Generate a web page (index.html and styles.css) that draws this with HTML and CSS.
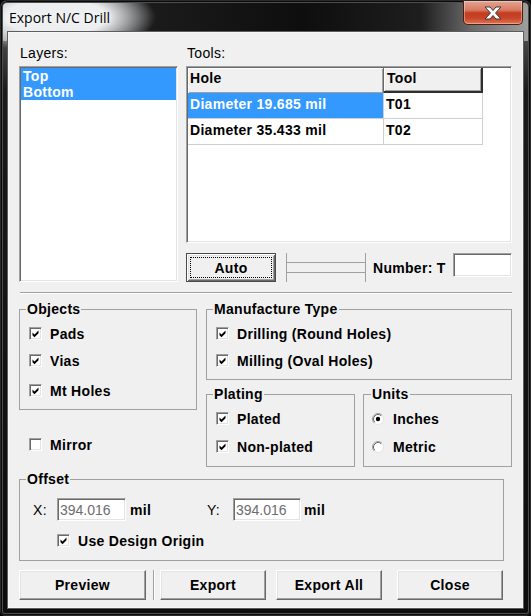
FILE: index.html
```html
<!DOCTYPE html>
<html lang="en">
<head>
  <meta charset="UTF-8" />
  <title>Export N/C Drill</title>
  <link rel="stylesheet" href="styles.css">
</head>
<body>
  <div class="window">
    <div class="titlebar">
      <span class="title">Export N/C Drill</span>
      <button class="close-btn" aria-label="Close">
        <svg width="18" height="14" viewBox="0 0 18 14">
          <path d="M1 1H6L9 4.5L12 1H17L11.5 7L17 13H12L9 9.5L6 13H1L6.5 7Z" fill="#fff" stroke="#3a3a3a" stroke-width="1"/>
        </svg>
      </button>
    </div>

    <div class="client">
      <div class="top">
        <div class="layers">
          <div class="caption">Layers:</div>
          <ul class="listbox">
            <li class="sel">Top</li>
            <li class="sel">Bottom</li>
          </ul>
        </div>

        <div class="tools">
          <div class="caption">Tools:</div>
          <div class="listview">
            <div class="lv-row lv-head">
              <div class="cell c-hole">Hole</div>
              <div class="cell c-tool">Tool</div>
            </div>
            <div class="lv-row">
              <div class="cell sel">Diameter 19.685 mil</div>
              <div class="cell">T01</div>
            </div>
            <div class="lv-row">
              <div class="cell">Diameter 35.433 mil</div>
              <div class="cell">T02</div>
            </div>
          </div>
          <div class="tool-row">
            <button class="btn default"><span class="focus">Auto</span></button>
            <div class="slider"><div class="track"></div></div>
            <span class="num-label">Number: T</span>
            <input class="edit num" type="text" value="">
          </div>
        </div>
      </div>

      <div class="sep"></div>

      <div class="groups">
        <div class="col-left">
          <fieldset class="grp objects">
            <legend>Objects</legend>
            <div class="check"><span class="box on"></span>Pads</div>
            <div class="check"><span class="box on"></span>Vias</div>
            <div class="check far"><span class="box on"></span>Mt Holes</div>
          </fieldset>
          <div class="check mirror"><span class="box"></span>Mirror</div>
        </div>

        <div class="col-right">
          <fieldset class="grp manufacture">
            <legend>Manufacture Type</legend>
            <div class="check"><span class="box on"></span>Drilling (Round Holes)</div>
            <div class="check"><span class="box on"></span>Milling (Oval Holes)</div>
          </fieldset>
          <div class="row2">
            <fieldset class="grp plating">
              <legend>Plating</legend>
              <div class="check"><span class="box on"></span>Plated</div>
              <div class="check wide"><span class="box on"></span>Non-plated</div>
            </fieldset>
            <fieldset class="grp units">
              <legend>Units</legend>
              <div class="radio"><span class="dot on"></span>Inches</div>
              <div class="radio wide"><span class="dot"></span>Metric</div>
            </fieldset>
          </div>
        </div>
      </div>

      <fieldset class="grp offset">
        <legend>Offset</legend>
        <div class="ofs-row">
          <span class="axis">X:</span>
          <input class="edit ofs" type="text" value="394.016">
          <span class="unit unit-x">mil</span>
          <span class="axis axis-y">Y:</span>
          <input class="edit ofs ofs-y" type="text" value="394.016">
          <span class="unit">mil</span>
        </div>
        <div class="check origin"><span class="box on"></span>Use Design Origin</div>
      </fieldset>

      <div class="buttons">
        <button class="btn big preview">Preview</button>
        <div class="vsep"></div>
        <button class="btn big">Export</button>
        <button class="btn big export-all">Export All</button>
        <button class="btn big close">Close</button>
      </div>
    </div>
  </div>
</body>
</html>
```

FILE: styles.css
```css
* {
  box-sizing: border-box;
  margin: 0;
  padding: 0;
}
body {
  width: 531px;
  height: 616px;
  overflow: hidden;
  background: #000;
  font-family: 'Liberation Sans', Arial, sans-serif;
  font-size: 14px;
  font-weight: bold;
  line-height: 16px;
  letter-spacing: 0.3px;
  color: #000;
}

/* window frame */
.window {
  width: 531px;
  height: 616px;
  padding: 0 7px 7px;
  border: 1px solid #2b2b2b;
  border-radius: 7px 7px 5px 5px;
  background:
    radial-gradient(100px 36px at 55px 16px, #eceef0 50%, rgba(236,238,240,0) 100%),
    linear-gradient(90deg, #9a9da1 0, #6a6c70 90px, #1b1b1b 150px, #0e0e0e 300px, #1e1e1e 420px, #6a6a6a 470px, #a2a2a2 531px) top left / 100% 40px no-repeat,
    linear-gradient(180deg, #6b6b6b 0, #1a1a1a 90px, #0d0d0d 100%);
  box-shadow: inset 0 0 0 1px #0a0a0a, inset 0 0 0 2px #4e4e4e;
}
.titlebar {
  display: flex;
  height: 31px;
}
.title {
  font-family: 'Open Sans', 'Noto Sans', sans-serif;
  font-weight: normal;
  font-size: 14px;
  line-height: 20px;
  letter-spacing: 0;
  padding: 7px 0 0 1px;
  text-shadow: 0 0 6px #fff, 0 0 10px #fff;
}
.close-btn {
  margin-left: auto;
  width: 60px;
  height: 24px;
  display: flex;
  align-items: center;
  justify-content: center;
  border: 1px solid #4f1e12;
  border-top: none;
  border-radius: 0 0 5px 5px;
  background: linear-gradient(#e4a392 0%, #d77a62 40%, #c33c1f 52%, #c8452b 75%, #e07650 100%);
  box-shadow: inset 0 0 0 1px rgba(255,255,255,0.35);
}

/* dialog client area */
.client {
  height: 576px;
  background: #f0f0f0;
  border: 1px solid #f7f7f7;
  box-shadow: 0 0 0 1px #5d5d5d;
  padding: 12px 0 0 10px;
}
.top {
  display: flex;
  gap: 8px;
}
.layers { width: 159px; }
.tools { width: 326px; }
.caption {
  font-weight: normal;
  padding-left: 1px;
  margin-bottom: 5px;
}

.listbox, .listview, .edit {
  background: #fff;
  border: 1px solid;
  border-color: #a0a0a0 #fff #fff #a0a0a0;
  box-shadow: inset 1px 1px #696969, inset -1px -1px #e3e3e3;
}
.listbox {
  height: 216px;
  padding: 1px;
  list-style: none;
}
.listbox li {
  height: 16px;
  padding-left: 2px;
}
.sel {
  background: #3399ff;
  color: #fff;
}

.listview {
  height: 177px;
  padding: 1px;
}
.lv-row {
  display: grid;
  grid-template-columns: 196px 99px;
}
.lv-row .cell {
  height: 26px;
  padding: 3px 2px 0;
  border-right: 1px solid #cfcfcf;
  border-bottom: 1px solid #cfcfcf;
  white-space: nowrap;
}
.lv-head .cell {
  height: 25px;
  padding-top: 2px;
  background: #f0f0f0;
  box-shadow: inset 1px 1px #fff, inset -1px -1px #a0a0a0;
}
.lv-head .c-hole {
  border-bottom: none;
  border-right: 1px solid #696969;
}
.lv-head .c-tool {
  border-right: 2px solid #2e2e2e;
  border-bottom: 2px solid #2e2e2e;
  padding-left: 3px;
}

.tool-row {
  display: flex;
  align-items: flex-start;
  height: 29px;
  margin-top: 10px;
}
.btn {
  font: inherit;
  letter-spacing: inherit;
  color: #000;
  background: #f0f0f0;
  border: 1px solid;
  border-color: #fff #696969 #696969 #fff;
  box-shadow: inset -1px -1px #a0a0a0, inset 1px 1px #e3e3e3;
}
.btn.default {
  width: 90px;
  height: 29px;
  padding: 3px;
  border: 1px solid #4a4a4a;
  box-shadow: inset 1px 1px #fff, inset -1px -1px #696969, inset 2px 2px #e3e3e3, inset -2px -2px #a0a0a0;
}
.focus {
  display: flex;
  align-items: center;
  justify-content: center;
  width: 100%;
  height: 100%;
  border: 1px dotted #000;
}
.slider {
  width: 80px;
  height: 29px;
  margin-left: 10px;
  padding-top: 9px;
  border-left: 1px solid #a0a0a0;
  border-right: 1px solid #a0a0a0;
}
.track {
  height: 11px;
  border-top: 1px solid #a0a0a0;
  border-bottom: 1px solid #a0a0a0;
}
.num-label {
  align-self: center;
  margin-left: 7px;
}
.edit {
  font: inherit;
  font-weight: normal;
  letter-spacing: 0;
  color: #6d6d6d;
  padding: 0 2px;
  outline: none;
}
.edit.num {
  margin-left: auto;
  width: 59px;
  height: 24px;
}

.sep {
  width: 492px;
  margin: 10px 0 0 1px;
  border-top: 1px solid #a0a0a0;
  border-bottom: 1px solid #fff;
}

/* group boxes */
.groups {
  display: flex;
  align-items: flex-start;
  gap: 9px;
  margin-top: 7px;
}
.grp {
  min-width: 0;
  border: 1px solid #a0a0a0;
}
.grp legend {
  padding: 0 1px;
  margin-left: -3px;
  line-height: 16px;
}
.objects {
  width: 178px;
  padding: 10px 0 12px 9px;
}
.col-right { width: 306px; }
.manufacture {
  padding: 10px 0 12px 9px;
}
.row2 {
  display: flex;
  gap: 8px;
  margin-top: 6px;
}
.plating, .units {
  width: 149px;
  padding: 10px 0 13px 9px;
}
.units { padding-left: 8px; }
.units legend { margin-left: -1px; }

.check, .radio {
  display: flex;
  align-items: center;
  gap: 8px;
  height: 13px;
  white-space: nowrap;
}
.check + .check { margin-top: 14px; }
.check.far { margin-top: 17px; }
.check.wide, .radio.wide { margin-top: 15px; }
.radio { gap: 9px; }
.mirror { margin: 28px 0 0 10px; }

.box {
  flex: none;
  width: 13px;
  height: 13px;
  background: #fff;
  border: 1px solid;
  border-color: #a0a0a0 #fff #fff #a0a0a0;
  box-shadow: inset 1px 1px #696969, inset -1px -1px #e3e3e3;
}
.box.on {
  background: #fff url("data:image/svg+xml,%3Csvg xmlns='http://www.w3.org/2000/svg' width='11' height='11'%3E%3Cpath d='M2.5 4.5L4.5 6.5L8.5 2.5V5.2L4.5 9.2L2.5 7.2Z' fill='%23000'/%3E%3C/svg%3E") no-repeat;
}
.dot {
  flex: none;
  width: 12px;
  height: 12px;
  background: url("data:image/svg+xml,%3Csvg xmlns='http://www.w3.org/2000/svg' width='12' height='12'%3E%3Ccircle cx='6' cy='6' r='5.5' fill='%23fff' stroke='%23e3e3e3'/%3E%3Cpath d='M2.11 9.89A5.5 5.5 0 0 1 9.89 2.11' fill='none' stroke='%23a0a0a0'/%3E%3Cpath d='M2.82 9.18A4.5 4.5 0 0 1 9.18 2.82' fill='none' stroke='%23696969'/%3E%3C/svg%3E") no-repeat;
}
.dot.on {
  background: url("data:image/svg+xml,%3Csvg xmlns='http://www.w3.org/2000/svg' width='12' height='12'%3E%3Ccircle cx='6' cy='6' r='5.5' fill='%23fff' stroke='%23e3e3e3'/%3E%3Cpath d='M2.11 9.89A5.5 5.5 0 0 1 9.89 2.11' fill='none' stroke='%23a0a0a0'/%3E%3Cpath d='M2.82 9.18A4.5 4.5 0 0 1 9.18 2.82' fill='none' stroke='%23696969'/%3E%3Ccircle cx='6' cy='6' r='2.2' fill='%23000'/%3E%3C/svg%3E") no-repeat;
}

/* offset */
.offset {
  width: 485px;
  margin-top: 4px;
  padding: 11px 0 13px 13px;
}
.offset legend { margin-left: -7px; }
.ofs-row {
  display: flex;
  align-items: center;
  height: 23px;
}
.axis {
  font-weight: normal;
  width: 24px;
}
.axis-y { width: 26px; }
.edit.ofs {
  width: 69px;
  height: 23px;
}
.edit.ofs-y { width: 68px; }
.unit { padding-left: 3px; }
.unit-x {
  width: 81px;
  padding-left: 4px;
}
.origin {
  margin: 13px 0 0 24px;
}

/* bottom buttons */
.buttons {
  display: flex;
  align-items: center;
  height: 30px;
  margin-top: 9px;
}
.btn.big {
  width: 106px;
  height: 30px;
}
.btn.preview { width: 127px; }
.vsep {
  width: 2px;
  height: 30px;
  margin: 0 5px 0 7px;
  border-left: 1px solid #a0a0a0;
  border-right: 1px solid #fff;
}
.btn.export-all { margin-left: 10px; }
.btn.close { margin-left: 15px; }
```
